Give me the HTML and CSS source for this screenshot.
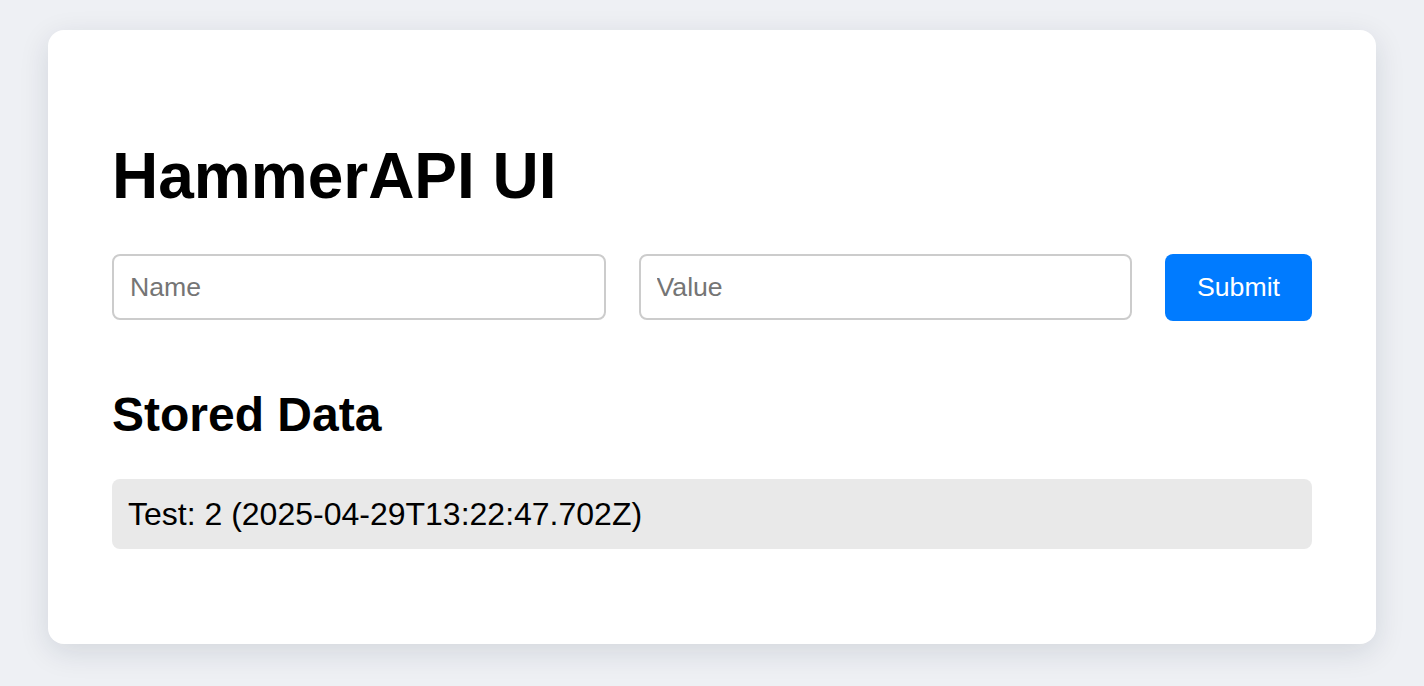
FILE: index.html
```html
<!DOCTYPE html>
<html lang="en">
<head>
<meta charset="utf-8">
<title>HammerAPI UI</title>
<link rel="stylesheet" href="styles.css">
</head>
<body>
  <main class="card">
    <h1 class="title">HammerAPI UI</h1>
    <form class="entry-form">
      <input class="field" type="text" placeholder="Name">
      <input class="field" type="text" placeholder="Value">
      <button class="submit" type="button">Submit</button>
    </form>
    <h2 class="subtitle">Stored Data</h2>
    <ul class="data-list">
      <li class="data-item">Test: 2 (2025-04-29T13:22:47.702Z)</li>
    </ul>
  </main>
</body>
</html>
```

FILE: styles.css
```css
html, body {
  margin: 0;
  padding: 0;
}

html {
  background: #eef0f4;
}

body {
  background: #eef0f4;
  font-family: "Liberation Sans", Arial, Helvetica, sans-serif;
  color: #000;
  padding: 30px 48px 42px;
  min-height: 686px;
  box-sizing: border-box;
}

.card {
  background: #fff;
  border-radius: 16px;
  padding: 64px;
  box-shadow: 0 8px 30px rgba(20, 30, 60, 0.12);
  box-sizing: border-box;
  width: 1328px;
}

.title {
  font-size: 64px;
  font-weight: bold;
  line-height: normal;
  margin: 45px 0 41px;
}

.entry-form {
  display: flex;
  gap: 33px;
  margin: 0;
}

.field {
  flex: 1;
  min-width: 0;
  height: 66px;
  box-sizing: border-box;
  padding: 0 16px;
  border: 2px solid #cccccc;
  border-radius: 8px;
  font-family: "Liberation Sans", Arial, sans-serif;
  font-size: 26.67px;
  color: #000;
  outline: none;
}

.field::placeholder {
  color: #757575;
}

.submit {
  width: 147px;
  height: 67px;
  border: none;
  border-radius: 8px;
  background: #007bff;
  color: #fff;
  font-family: "Liberation Sans", Arial, sans-serif;
  font-size: 26.67px;
  padding: 0;
  cursor: pointer;
}

.subtitle {
  font-size: 48px;
  font-weight: bold;
  line-height: normal;
  margin: 66px 0 37px;
}

.data-list {
  list-style: none;
  margin: 0 0 31px;
  padding: 0;
}

.data-item {
  background: #e9e9e9;
  border-radius: 8px;
  padding: 16px;
  font-size: 32px;
  line-height: 38px;
}
```
